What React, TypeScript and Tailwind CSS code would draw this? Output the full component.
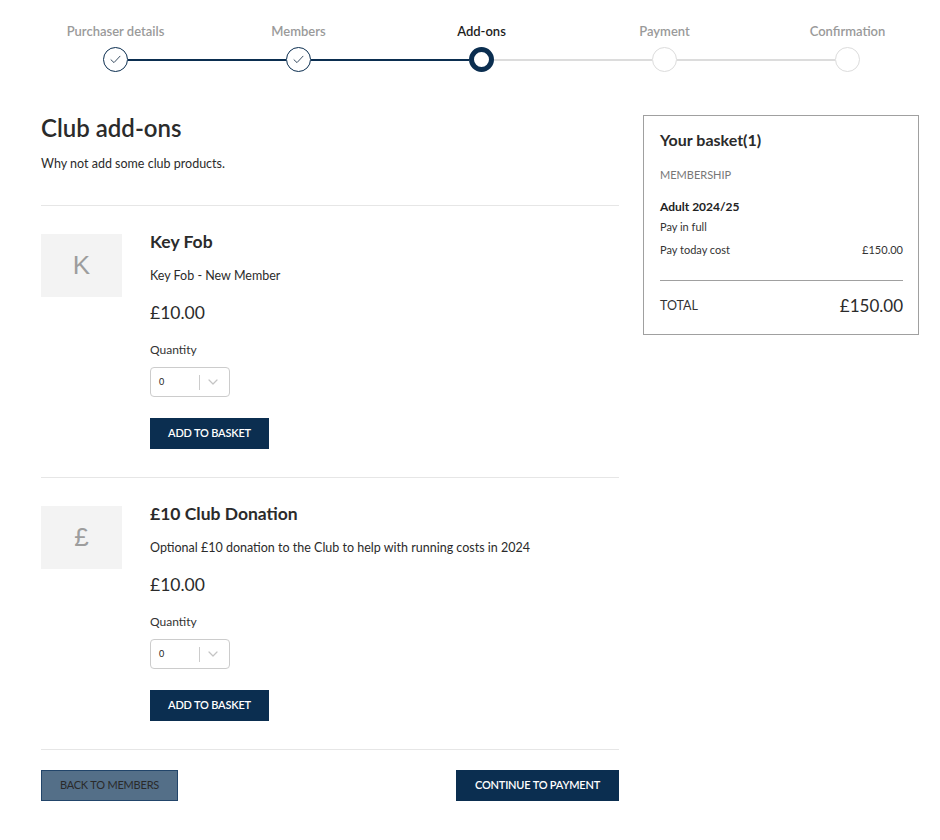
import React from "react";

const steps = ["Purchaser details", "Members", "Add-ons", "Payment", "Confirmation"];
const active = 2;

function Check() {
  return (
    <svg width="11" height="9" viewBox="0 0 11 9" fill="none">
      <path d="M1 4.8 L4 7.6 L10 1.2" stroke="#3b4f63" strokeWidth="1" strokeLinecap="round" strokeLinejoin="round" />
    </svg>
  );
}

function Stepper() {
  return (
    <div className="ml-[24px] grid w-[915px] grid-cols-5 pt-[23px]">
      {steps.map((s, i) => {
        const leftNavy = i <= active;
        const rightNavy = i < active;
        return (
          <div key={s} className="flex flex-col items-center">
            <div
              className={
                i === active
                  ? "text-[13px] leading-[16px] font-semibold text-[#1d1d1d]"
                  : "text-[13px] leading-[16px] font-semibold text-[#9a9a9a]"
              }
            >
              {s}
            </div>
            <div className="mt-[8px] flex w-full items-center">
              <div
                className={
                  i === 0
                    ? "h-[2px] flex-1 bg-transparent"
                    : leftNavy
                    ? "h-[2px] flex-1 bg-[#0b2e50]"
                    : "h-[2px] flex-1 bg-[#dcdcdc]"
                }
              />
              {i < active ? (
                <div className="flex h-[25px] w-[25px] items-center justify-center rounded-full border-[1.5px] border-[#0b2e50] bg-white">
                  <Check />
                </div>
              ) : i === active ? (
                <div className="h-[25px] w-[25px] rounded-full border-[5px] border-[#0b2e50] bg-white" />
              ) : (
                <div className="h-[25px] w-[25px] rounded-full border-[1.5px] border-[#dcdcdc] bg-white" />
              )}
              <div
                className={
                  i === steps.length - 1
                    ? "h-[2px] flex-1 bg-transparent"
                    : rightNavy
                    ? "h-[2px] flex-1 bg-[#0b2e50]"
                    : "h-[2px] flex-1 bg-[#dcdcdc]"
                }
              />
            </div>
          </div>
        );
      })}
    </div>
  );
}

function Chevron() {
  return (
    <svg width="10" height="6" viewBox="0 0 10 6" fill="none">
      <path d="M1 1 L5 5 L9 1" stroke="#c4c4c4" strokeWidth="1.2" strokeLinecap="round" strokeLinejoin="round" />
    </svg>
  );
}

function Item({ letter, title, desc, price }: { letter: string; title: string; desc: string; price: string }) {
  return (
    <div className="flex border-b border-[#e6e6e6] pt-[25px] pb-[28px]">
      <div className="mt-[3px] flex h-[63px] w-[81px] shrink-0 items-center justify-center bg-[#f3f3f3] font-['Liberation_Sans',sans-serif] text-[26px] text-[#9d9d9d]">
        {letter}
      </div>
      <div className="ml-[28px] flex flex-col items-start">
        <div className="text-[17.5px] leading-[22px] font-bold text-[#2b2b2b]">{title}</div>
        <div className="mt-[14px] text-[12.5px] leading-[18px] text-[#2b2b2b]">{desc}</div>
        <div className="mt-[17px] text-[17.5px] leading-[22px] text-[#2b2b2b]">{price}</div>
        <div className="mt-[18px] text-[12px] leading-[16px] text-[#333]">Quantity</div>
        <div className="mt-[9px] flex h-[30px] w-[80px] items-center rounded-[4px] border border-[#cccccc] bg-white">
          <span className="ml-[8px] w-[40px] text-[9px] leading-[10px] text-[#222]">0</span>
          <span className="h-[15px] w-px bg-[#cccccc]" />
          <span className="ml-[8px] flex items-center">
            <Chevron />
          </span>
        </div>
        <button className="mt-[21px] flex h-[31px] w-[119px] items-center justify-center bg-[#0b2e50] text-[11px] font-semibold tracking-[-0.2px] text-white">
          ADD TO BASKET
        </button>
      </div>
    </div>
  );
}

export default function App() {
  return (
    <div className="min-h-[840px] w-[940px] bg-white font-['Lato',sans-serif] text-[#2b2b2b]">
      <Stepper />
      <div className="mt-[41px] ml-[41px] flex gap-[24px]">
        <div className="w-[578px]">
          <h1 className="text-[24px] leading-[29px] font-semibold text-[#2b2b2b]">Club add-ons</h1>
          <p className="mt-[13px] text-[12.5px] leading-[18px] text-[#2b2b2b]">Why not add some club products.</p>
          <div className="mt-[32px] border-t border-[#e6e6e6]" />
          <Item letter="K" title="Key Fob" desc="Key Fob - New Member" price="£10.00" />
          <Item
            letter="£"
            title="£10 Club Donation"
            desc="Optional £10 donation to the Club to help with running costs in 2024"
            price="£10.00"
          />
          <div className="mt-[20px] flex justify-between">
            <button className="flex h-[31px] w-[137px] items-center justify-center border border-[#22456a] bg-[#546f88] text-[11px] tracking-[-0.2px] text-[#2a2a2a]">
              BACK TO MEMBERS
            </button>
            <button className="flex h-[31px] w-[163px] items-center justify-center bg-[#0b2e50] text-[11px] font-semibold tracking-[-0.2px] text-white">
              CONTINUE TO PAYMENT
            </button>
          </div>
        </div>
        <div className="mt-[2px] h-fit w-[276px] border border-[#a0a0a0] pt-[14px] pr-[15px] pb-[16px] pl-[16px]">
          <div className="text-[16px] leading-[20px] font-bold text-[#2b2b2b]">Your basket(1)</div>
          <div className="mt-[18px] text-[11px] leading-[14px] text-[#777]">MEMBERSHIP</div>
          <div className="mt-[17px] text-[12px] leading-[15px] font-bold text-[#222]">Adult 2024/25</div>
          <div className="mt-[6px] text-[11px] leading-[14px] text-[#333]">Pay in full</div>
          <div className="mt-[9px] flex justify-between text-[11px] leading-[14px] text-[#333]">
            <span>Pay today cost</span>
            <span>£150.00</span>
          </div>
          <div className="mt-[23px] border-t border-[#a0a0a0]" />
          <div className="mt-[13px] flex h-[24px] items-center justify-between">
            <span className="text-[12.5px] text-[#333]">TOTAL</span>
            <span className="text-[17px] text-[#2b2b2b]">£150.00</span>
          </div>
        </div>
      </div>
    </div>
  );
}
